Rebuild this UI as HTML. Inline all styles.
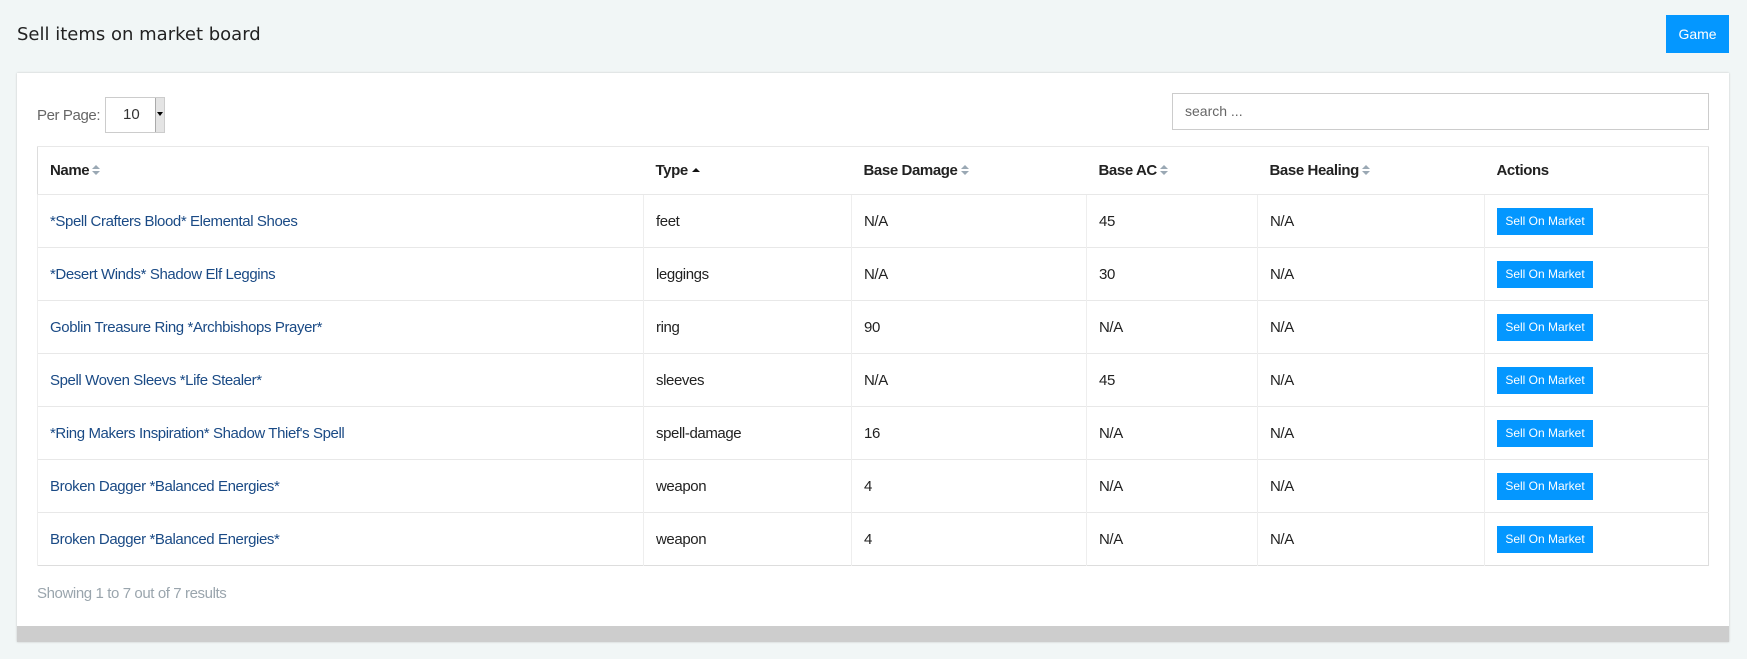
<!DOCTYPE html>
<html><head><style>
*{box-sizing:border-box;margin:0;padding:0}
body{width:1747px;height:659px;background:#f1f6f6;font-family:"Liberation Sans",sans-serif;font-size:14px;color:#222;position:relative;overflow:hidden}
.title{position:absolute;left:17px;top:24px;font-family:"DejaVu Sans",sans-serif;font-size:18px;color:#222}
.game{position:absolute;left:1666px;top:15px;width:63px;height:38px;background:#0497ff;color:#fff;font-size:14px;line-height:38px;text-align:center}
.card{position:absolute;left:17px;top:73px;width:1712px;height:569px;background:#fff;border-bottom:16px solid #cdcdcd;box-shadow:0 0 2px rgba(0,0,0,.2)}
.pp{position:absolute;left:37px;top:107px;color:#666;font-size:15px;letter-spacing:-0.4px}
.sel{position:absolute;left:105px;top:97px;width:60px;height:36px;border:1px solid #ccc;font-size:15px;line-height:34px;padding-left:17px;color:#333}
.sel i{position:absolute;right:0;top:0;width:9px;height:34px;background:#e4e4e4;border-left:1px solid #aaa}
.sel i:after{content:"";position:absolute;left:1px;top:14px;border:3px solid transparent;border-top:4px solid #000}
.search{position:absolute;left:1172px;top:93px;width:537px;height:37px;border:1px solid #ccc;color:#666;font-size:14px;line-height:35px;padding-left:12px}
table{position:absolute;left:37px;top:146px;width:1672px;border-collapse:collapse;border:1px solid #ddd;table-layout:fixed}
td,th{border-top:1px solid #e8e8e8;border-left:1px solid #eee;text-align:left;padding:0 12px;height:53px;font-size:15px;letter-spacing:-0.4px}
th{height:48px;font-weight:bold;border-left:none;color:#222}
td a{color:#1a4a85;text-decoration:none}
.s{display:inline-block;width:8px;height:11px;vertical-align:-1px;margin-left:3px;position:relative}
.s:before{content:"";position:absolute;left:0;top:0;border:4px solid transparent;border-bottom:4px solid #9aa8b4;border-top:none}
.s:after{content:"";position:absolute;left:0;top:6px;border:4px solid transparent;border-top:4px solid #9aa8b4;border-bottom:none}
.up{display:inline-block;margin-left:4px;vertical-align:3px;border:4px solid transparent;border-bottom:4px solid #111;border-top:none}
.btn{display:inline-block;background:#0497ff;color:#fff;font-size:12px;letter-spacing:0;width:96px;height:27px;line-height:27px;text-align:center}
.foot{position:absolute;left:37px;top:585px;color:#9aa5ad;font-size:15px;letter-spacing:-0.4px}
</style></head><body>
<div class="title">Sell items on market board</div>
<div class="game">Game</div>
<div class="card"></div>
<div class="pp">Per Page:</div>
<div class="sel">10<i></i></div>
<div class="search">search ...</div>
<table>
<colgroup><col style="width:606px"><col style="width:208px"><col style="width:235px"><col style="width:171px"><col style="width:227px"><col></colgroup>
<tr><th>Name<span class="s"></span></th><th>Type<span class="up"></span></th><th>Base Damage<span class="s"></span></th><th>Base AC<span class="s"></span></th><th>Base Healing<span class="s"></span></th><th>Actions</th></tr>
<tr><td><a>*Spell Crafters Blood* Elemental Shoes</a></td><td>feet</td><td>N/A</td><td>45</td><td>N/A</td><td><span class="btn">Sell On Market</span></td></tr>
<tr><td><a>*Desert Winds* Shadow Elf Leggins</a></td><td>leggings</td><td>N/A</td><td>30</td><td>N/A</td><td><span class="btn">Sell On Market</span></td></tr>
<tr><td><a>Goblin Treasure Ring *Archbishops Prayer*</a></td><td>ring</td><td>90</td><td>N/A</td><td>N/A</td><td><span class="btn">Sell On Market</span></td></tr>
<tr><td><a>Spell Woven Sleevs *Life Stealer*</a></td><td>sleeves</td><td>N/A</td><td>45</td><td>N/A</td><td><span class="btn">Sell On Market</span></td></tr>
<tr><td><a>*Ring Makers Inspiration* Shadow Thief's Spell</a></td><td>spell-damage</td><td>16</td><td>N/A</td><td>N/A</td><td><span class="btn">Sell On Market</span></td></tr>
<tr><td><a>Broken Dagger *Balanced Energies*</a></td><td>weapon</td><td>4</td><td>N/A</td><td>N/A</td><td><span class="btn">Sell On Market</span></td></tr>
<tr><td><a>Broken Dagger *Balanced Energies*</a></td><td>weapon</td><td>4</td><td>N/A</td><td>N/A</td><td><span class="btn">Sell On Market</span></td></tr>
</table>
<div class="foot">Showing 1 to 7 out of 7 results</div>
</body></html>
